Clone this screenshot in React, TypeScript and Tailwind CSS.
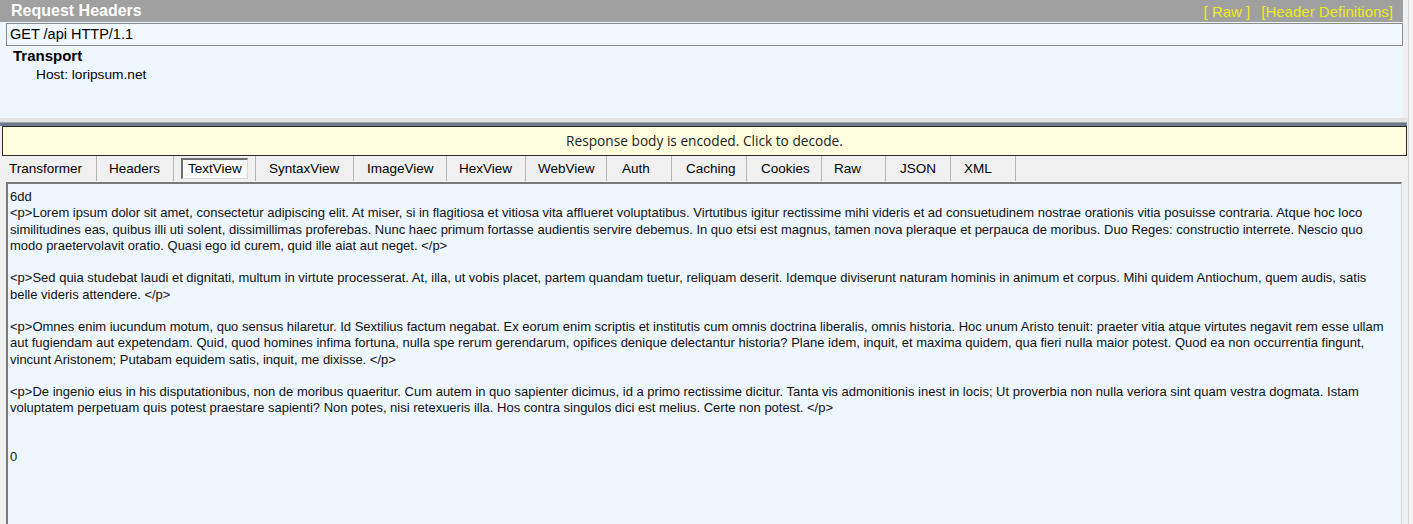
import React from "react";

const tabs: { label: string; w: number; pl: number; selected?: boolean }[] = [
  { label: "Transformer", w: 97, pl: 9 },
  { label: "Headers", w: 77, pl: 12 },
  { label: "TextView", w: 82, pl: 14, selected: true },
  { label: "SyntaxView", w: 98, pl: 13 },
  { label: "ImageView", w: 93, pl: 13 },
  { label: "HexView", w: 79, pl: 12 },
  { label: "WebView", w: 81, pl: 12 },
  { label: "Auth", w: 65, pl: 15 },
  { label: "Caching", w: 75, pl: 14 },
  { label: "Cookies", w: 75, pl: 14 },
  { label: "Raw", w: 64, pl: 12 },
  { label: "JSON", w: 65, pl: 14 },
  { label: "XML", w: 65, pl: 13 },
];

const lines: string[] = [
  "6dd",
  "<p>Lorem ipsum dolor sit amet, consectetur adipiscing elit. At miser, si in flagitiosa et vitiosa vita afflueret voluptatibus. Virtutibus igitur rectissime mihi videris et ad consuetudinem nostrae orationis vitia posuisse contraria. Atque hoc loco",
  "similitudines eas, quibus illi uti solent, dissimillimas proferebas. Nunc haec primum fortasse audientis servire debemus. In quo etsi est magnus, tamen nova pleraque et perpauca de moribus. Duo Reges: constructio interrete. Nescio quo",
  "modo praetervolavit oratio. Quasi ego id curem, quid ille aiat aut neget. </p>",
  "",
  "<p>Sed quia studebat laudi et dignitati, multum in virtute processerat. At, illa, ut vobis placet, partem quandam tuetur, reliquam deserit. Idemque diviserunt naturam hominis in animum et corpus. Mihi quidem Antiochum, quem audis, satis",
  "belle videris attendere. </p>",
  "",
  "<p>Omnes enim iucundum motum, quo sensus hilaretur. Id Sextilius factum negabat. Ex eorum enim scriptis et institutis cum omnis doctrina liberalis, omnis historia. Hoc unum Aristo tenuit: praeter vitia atque virtutes negavit rem esse ullam",
  "aut fugiendam aut expetendam. Quid, quod homines infima fortuna, nulla spe rerum gerendarum, opifices denique delectantur historia? Plane idem, inquit, et maxima quidem, qua fieri nulla maior potest. Quod ea non occurrentia fingunt,",
  "vincunt Aristonem; Putabam equidem satis, inquit, me dixisse. </p>",
  "",
  "<p>De ingenio eius in his disputationibus, non de moribus quaeritur. Cum autem in quo sapienter dicimus, id a primo rectissime dicitur. Tanta vis admonitionis inest in locis; Ut proverbia non nulla veriora sint quam vestra dogmata. Istam",
  "voluptatem perpetuam quis potest praestare sapienti? Non potes, nisi retexueris illa. Hos contra singulos dici est melius. Certe non potest. </p>",
  "",
  "",
  "0",
];

export default function App() {
  return (
    <div className="w-[1413px] h-[524px] overflow-hidden bg-[#f0f0f0] flex font-['Liberation_Sans',Arial,sans-serif] text-black">
      <div className="w-[1408px] flex flex-col">
        {/* Request headers panel */}
        <div className="w-[1403px] h-[118px] bg-[#eef6ff] flex flex-col">
          <div className="h-[22px] bg-[#a0a0a0] flex items-center justify-between pl-[11px] pr-[10px]">
            <span className="text-white font-bold text-[16px] leading-none">Request Headers</span>
            <div className="flex gap-[11px] text-[#ecec20] text-[15px] leading-none">
              <span>[ Raw ]</span>
              <span>[Header Definitions]</span>
            </div>
          </div>
          <div className="ml-[6px] w-[1397px] h-[23px] mt-px border border-[#8a8a8a] bg-[#f2f8ff] flex items-center pl-[3px] text-[14.5px]">
            GET /api HTTP/1.1
          </div>
          <div className="ml-[13px] text-[15px] font-bold leading-[19px]">Transport</div>
          <div className="ml-[36px] text-[13.7px] leading-[19px]">Host: loripsum.net</div>
        </div>
        {/* splitter */}
        <div className="h-[4px] bg-[#e4e4e4]" />
        <div className="h-[4px] w-[1407px] bg-[#6f7b8a] border-t border-[#9aa4b0]" />
        {/* encoded bar */}
        <div className="ml-[2px] w-[1405px] h-[30px] bg-[#ffffe0] border border-[#2a2a2a] flex items-center justify-center font-['Open_Sans',sans-serif] text-[13.7px] text-[#222]">
          Response body is encoded. Click to decode.
        </div>
        {/* tabs */}
        <div className="h-[25px] flex items-stretch text-[13.5px]">
          {tabs.map((t) => (
            <div
              key={t.label}
              className="relative flex items-center border-r border-[#b4b4b4]"
              style={{ width: t.w, paddingLeft: t.pl }}
            >
              {t.selected ? (
                <span className="absolute left-[7px] top-[2px] bottom-[2px] right-[7px] bg-[#fafafa] border-l-2 border-t-2 border-r border-b border-l-[#6e6e6e] border-t-[#6e6e6e] border-r-[#d8d8d8] border-b-[#d8d8d8]" />
              ) : null}
              <span className="relative leading-none">{t.label}</span>
            </div>
          ))}
        </div>
        {/* content */}
        <div className="ml-[6px] mt-[1px] w-[1396px] flex-1 bg-[#eef6ff] border-l-2 border-t-2 border-[#7a7a7a] border-r border-r-[#d8d8d8] pl-[2px] pt-[5px] text-[13px] leading-[16.25px] text-[#111]">
          {lines.map((l, i) => (
            <div key={i} className="whitespace-pre h-[16.25px]">
              {l}
            </div>
          ))}
        </div>
      </div>
      <div className="w-[5px] border-l border-[#d6d6d6] bg-[#f4f4f4]" />
    </div>
  );
}
